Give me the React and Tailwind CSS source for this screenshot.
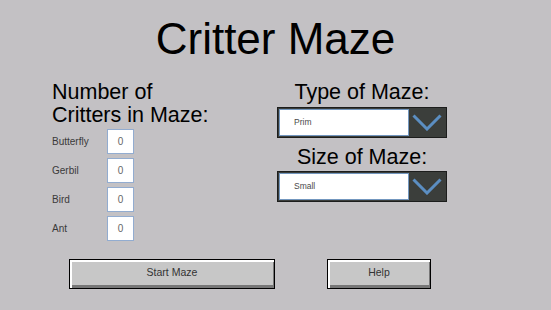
import React from 'react';

const critters = ['Butterfly', 'Gerbil', 'Bird', 'Ant'];

const Dropdown = ({ value }) => (
    <div className="flex h-[31px] w-[170px] border border-[#1c1d1c] bg-[#3b3e3b] p-[1px]">
        <div className="flex flex-1 items-center border border-[#7397bf] bg-white pl-[14px] text-[8.5px] text-[#4a4a4a]">
            {value}
        </div>
        <div className="flex w-[36px] items-center justify-center">
            <svg width="30" height="17" viewBox="0 0 30 17">
                <polyline points="1.5,1.5 15,15 28.5,1.5" fill="none" stroke="#5b8ec2" strokeWidth="3" />
            </svg>
        </div>
    </div>
);

const Button = ({ label, width }) => (
    <button
        type="button"
        className={`${width} h-[30px] border border-black bg-[#c7c7c7] pb-[2px] text-[10.5px] text-[#333] shadow-[inset_2px_2px_0_#ffffff,inset_-1px_-3px_0_#777777]`}
    >
        {label}
    </button>
);

const App = () => {
    return (
        <div
            className="h-[310px] w-[551px] overflow-hidden bg-[#c3c1c4] text-black"
            style={{ fontFamily: '"Liberation Sans", Arial, sans-serif' }}
        >
            <h1 className="pt-[17px] text-center text-[44px] leading-none">Critter Maze</h1>

            <div className="mt-[20px] flex pl-[52px]">
                {/* critter counts */}
                <div className="w-[225px]">
                    <h2 className="text-[21.5px] leading-[23px]">
                        Number of
                        <br />
                        Critters in Maze:
                    </h2>
                    <div className="mt-[2px] flex flex-col gap-[4px]">
                        {critters.map((name) => (
                            <div key={name} className="flex items-center">
                                <span className="w-[55px] text-[10px] text-[#3a3a3a]">{name}</span>
                                <input
                                    type="text"
                                    readOnly
                                    value="0"
                                    className="h-[25px] w-[27px] border border-[#92acd0] bg-white text-center text-[10px] text-[#666] outline-none"
                                />
                            </div>
                        ))}
                    </div>
                </div>

                {/* maze options */}
                <div className="flex w-[170px] flex-col items-center">
                    <h2 className="text-[21.5px] leading-[23px]">Type of Maze:</h2>
                    <div className="mt-[3px]">
                        <Dropdown value="Prim" />
                    </div>
                    <h2 className="mt-[8px] text-[21.5px] leading-[23px]">Size of Maze:</h2>
                    <div className="mt-[2px]">
                        <Dropdown value="Small" />
                    </div>
                </div>
            </div>

            <div className="mt-[18px] flex gap-[52px] pl-[69px]">
                <Button label="Start Maze" width="w-[206px]" />
                <Button label="Help" width="w-[104px]" />
            </div>
        </div>
    );
};

export default App;
